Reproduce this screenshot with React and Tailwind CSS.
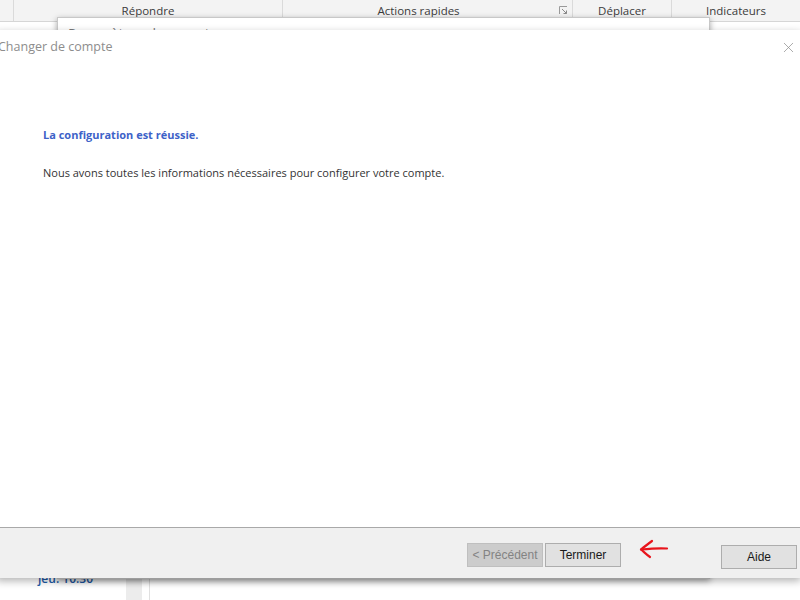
import { X } from 'lucide-react';

const ribbonGroups = [
  { label: '', width: 'w-[14px]' },
  { label: 'Répondre', width: 'w-[269px]' },
  { label: 'Actions rapides', width: 'w-[290px] pr-[18px]', launcher: true },
  { label: 'Déplacer', width: 'w-[99px]' },
  { label: 'Indicateurs', width: 'flex-1' },
];

function Ribbon() {
  return (
    <div className="flex h-[22px] border-b border-[#d6d6d6] bg-[#f3f3f3] text-[11.5px] text-[#3b3b3b]">
      {ribbonGroups.map((group, i) => (
        <div key={i} className={`relative flex items-center justify-center ${group.width} ${i < ribbonGroups.length - 1 ? 'border-r border-[#dadada]' : ''}`}>
          {group.label}
          {group.launcher && (
            <svg className="absolute right-[4px] top-[6px]" width="9" height="9" viewBox="0 0 9 9">
              <path d="M0.5 8V0.5H8" fill="none" stroke="#9a9a9a" />
              <path d="M3 3L7.5 7.5M4.5 7.5H7.5V4.5" fill="none" stroke="#8a8a8a" />
            </svg>
          )}
        </div>
      ))}
    </div>
  );
}

function Button({ children, disabled }) {
  return (
    <button
      type="button"
      className={`h-[24px] w-[76px] border text-[12px] font-['Liberation_Sans',sans-serif] ${disabled ? 'border-[#bfbfbf] bg-[#cccccc] text-[#838383]' : 'border-[#adadad] bg-[#e1e1e1] text-[#1a1a1a]'}`}
    >
      {children}
    </button>
  );
}

export default function App() {
  return (
    <div className="relative h-[600px] w-[800px] overflow-hidden bg-white font-['Open_Sans','Noto_Sans',sans-serif]">
      <Ribbon />

      {/* mail list peeking out below the windows */}
      <div className="absolute left-0 top-[560px] flex h-[40px] w-[800px]">
        <div className="w-[126px] pt-[10px] pl-[38px] text-[12px] font-semibold text-[#1e5aa8]">jeu. 10:30</div>
        <div className="w-[16px] bg-[#ececec]" />
        <div className="w-[7px]" />
        <div className="w-px bg-[#e0e0e0]" />
      </div>

      {/* account settings window behind */}
      <div className="absolute left-[57px] top-[17px] h-[562px] w-[653px] border border-[#c8c8c8] bg-white shadow-[0_2px_6px_rgba(0,0,0,0.35)]">
        <div className="flex items-center justify-between px-[10px] pt-[5px] text-[14px] text-[#7a7a7a]">
          <span>Paramètres du compte</span>
          <X size={14} strokeWidth={1} className="text-[#8a8a8a]" />
        </div>
      </div>

      {/* change account dialog */}
      <div className="absolute left-[-4px] top-[30px] flex h-[548px] w-[805px] flex-col bg-white shadow-[0_3px_8px_rgba(0,0,0,0.3)]">
        <div className="flex h-[34px] items-center justify-between pl-[2px] pr-[4px]">
          <span className="text-[12.5px] text-[#8d8d8d]">Changer de compte</span>
          <X size={17} strokeWidth={1} className="text-[#8a8a8a]" />
        </div>

        <div className="flex-1 pl-[47px] pt-[63px] text-[11px]">
          <p className="font-bold text-[#3d62c8]">La configuration est réussie.</p>
          <p className="mt-[21px] text-[#333333]">Nous avons toutes les informations nécessaires pour configurer votre compte.</p>
        </div>

        <div className="flex h-[51px] items-start border-t border-[#a9a9a9] bg-[#f0f0f0] pl-[471px] pt-[15px]">
          <div className="flex gap-[2px]">
            <Button disabled>&lt; Précédent</Button>
            <Button>Terminer</Button>
          </div>
          <svg className="ml-[16px] mt-[-5px]" width="32" height="22" viewBox="0 0 32 22">
            <path d="M30 10.5C24 10 14 10.5 4 11.5" fill="none" stroke="#e8141c" strokeWidth="2.2" strokeLinecap="round" />
            <path d="M15 3C11 6 7 9 4 11.5C7 14 10 17 13 19" fill="none" stroke="#e8141c" strokeWidth="2.2" strokeLinecap="round" strokeLinejoin="round" />
          </svg>
          <div className="ml-[52px]">
            <Button>Aide</Button>
          </div>
        </div>
      </div>
    </div>
  );
}
